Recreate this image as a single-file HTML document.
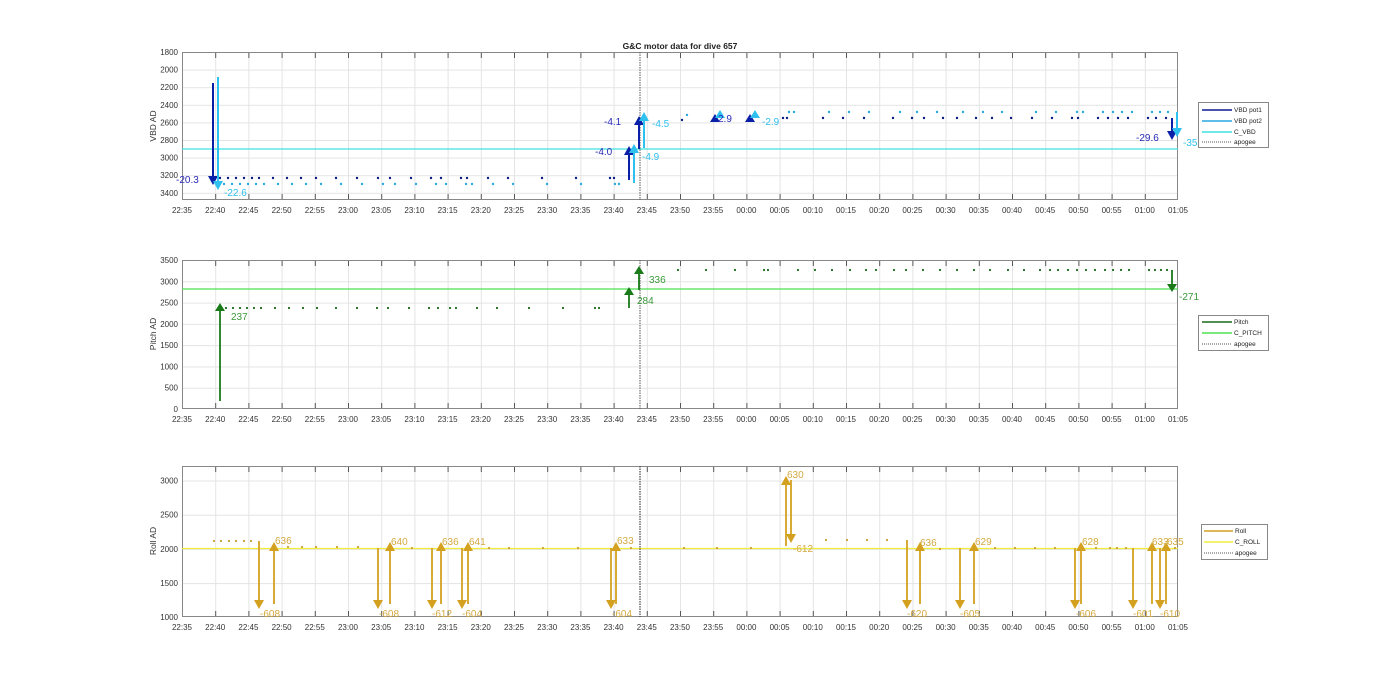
<!DOCTYPE html>
<html><head><meta charset="utf-8"><style>
html,body{margin:0;padding:0;background:#fff;}
svg{display:block;font-family:"Liberation Sans",sans-serif;}
.tl{font-size:8px;fill:#333;}
</style></head><body>
<svg width="1400" height="693" viewBox="0 0 1400 693" xmlns="http://www.w3.org/2000/svg">
<defs>
<pattern id="gv" patternUnits="userSpaceOnUse" x="182" y="0" width="33.2" height="10"><line x1="0.5" y1="0" x2="0.5" y2="10" stroke="#e4e4e4" stroke-width="1"/></pattern>
<pattern id="tk" patternUnits="userSpaceOnUse" x="182" y="0" width="33.2" height="10"><line x1="0.5" y1="0" x2="0.5" y2="10" stroke="#555" stroke-width="1"/></pattern>
<pattern id="h1" patternUnits="userSpaceOnUse" x="0" y="52" width="10" height="17.6"><line x1="0" y1="0.5" x2="10" y2="0.5" stroke="#e4e4e4"/></pattern>
<pattern id="h2" patternUnits="userSpaceOnUse" x="0" y="260" width="10" height="21.29"><line x1="0" y1="0.5" x2="10" y2="0.5" stroke="#e4e4e4"/></pattern>
<pattern id="h3" patternUnits="userSpaceOnUse" x="0" y="480.5" width="10" height="34.2"><line x1="0" y1="0.5" x2="10" y2="0.5" stroke="#e4e4e4"/></pattern>
<marker id="mb" markerWidth="8" markerHeight="8" refX="4" refY="6" orient="auto-start-reverse" markerUnits="userSpaceOnUse"><path d="M0,0 L8,0 L4,7 Z" transform="rotate(0)" fill="#0a1fa8"/></marker>
</defs>

<!-- title -->
<text x="680" y="49" text-anchor="middle" font-size="8.5" font-weight="bold" fill="#222">G&amp;C motor data for dive 657</text>

<!-- ===== PANEL 1 ===== -->
<rect x="182" y="52" width="996" height="148" fill="url(#h1)"/>
<rect x="182" y="52" width="996" height="148" fill="url(#gv)"/>
<rect x="182" y="52" width="996" height="6" fill="url(#tk)"/>
<rect x="182" y="194" width="996" height="6" fill="url(#tk)"/>
<rect x="182.5" y="52.5" width="995" height="147" fill="none" stroke="#888"/>
<g class="tl" text-anchor="end">
<text x="178" y="55">1800</text><text x="178" y="72.6">2000</text><text x="178" y="90.2">2200</text><text x="178" y="107.8">2400</text><text x="178" y="125.4">2600</text><text x="178" y="143">2800</text><text x="178" y="160.6">3000</text><text x="178" y="178.2">3200</text><text x="178" y="195.8">3400</text>
</g>
<text transform="translate(156,126) rotate(-90)" text-anchor="middle" font-size="8.5" fill="#333">VBD AD</text>
<line x1="182" y1="149" x2="1178" y2="149" stroke="#3ee0e0" stroke-width="1.3"/>
<line x1="640" y1="52" x2="640" y2="200" stroke="#555" stroke-width="1" stroke-dasharray="1.5,1"/>
<g fill="#0a1a80">
<circle cx="220" cy="178" r="1.2"/><circle cx="228" cy="178" r="1.2"/><circle cx="236" cy="178" r="1.2"/><circle cx="244" cy="178" r="1.2"/><circle cx="252" cy="178" r="1.2"/><circle cx="259" cy="178" r="1.2"/><circle cx="273" cy="178" r="1.2"/><circle cx="287" cy="178" r="1.2"/><circle cx="301" cy="178" r="1.2"/><circle cx="316" cy="178" r="1.2"/><circle cx="336" cy="178" r="1.2"/><circle cx="357" cy="178" r="1.2"/><circle cx="378" cy="178" r="1.2"/><circle cx="390" cy="178" r="1.2"/><circle cx="411" cy="178" r="1.2"/><circle cx="431" cy="178" r="1.2"/><circle cx="441" cy="178" r="1.2"/><circle cx="461" cy="178" r="1.2"/><circle cx="467" cy="178" r="1.2"/><circle cx="488" cy="178" r="1.2"/><circle cx="508" cy="178" r="1.2"/><circle cx="542" cy="178" r="1.2"/><circle cx="576" cy="178" r="1.2"/><circle cx="610" cy="178" r="1.2"/><circle cx="614" cy="178" r="1.2"/>
<circle cx="682" cy="120" r="1.2"/><circle cx="783" cy="118" r="1.2"/><circle cx="787" cy="118" r="1.2"/><circle cx="823" cy="118" r="1.2"/><circle cx="843" cy="118" r="1.2"/><circle cx="864" cy="118" r="1.2"/><circle cx="893" cy="118" r="1.2"/><circle cx="912" cy="118" r="1.2"/><circle cx="924" cy="118" r="1.2"/><circle cx="943" cy="118" r="1.2"/><circle cx="957" cy="118" r="1.2"/><circle cx="976" cy="118" r="1.2"/><circle cx="992" cy="118" r="1.2"/><circle cx="1011" cy="118" r="1.2"/><circle cx="1032" cy="118" r="1.2"/><circle cx="1052" cy="118" r="1.2"/><circle cx="1072" cy="118" r="1.2"/><circle cx="1078" cy="118" r="1.2"/><circle cx="1098" cy="118" r="1.2"/><circle cx="1108" cy="118" r="1.2"/><circle cx="1118" cy="118" r="1.2"/><circle cx="1128" cy="118" r="1.2"/><circle cx="1148" cy="118" r="1.2"/><circle cx="1156" cy="118" r="1.2"/><circle cx="1166" cy="118" r="1.2"/>
</g>
<g fill="#2aa8e0">
<circle cx="224" cy="184" r="1.2"/><circle cx="232" cy="184" r="1.2"/><circle cx="240" cy="184" r="1.2"/><circle cx="248" cy="184" r="1.2"/><circle cx="256" cy="184" r="1.2"/><circle cx="264" cy="184" r="1.2"/><circle cx="278" cy="184" r="1.2"/><circle cx="292" cy="184" r="1.2"/><circle cx="306" cy="184" r="1.2"/><circle cx="321" cy="184" r="1.2"/><circle cx="341" cy="184" r="1.2"/><circle cx="362" cy="184" r="1.2"/><circle cx="383" cy="184" r="1.2"/><circle cx="395" cy="184" r="1.2"/><circle cx="416" cy="184" r="1.2"/><circle cx="436" cy="184" r="1.2"/><circle cx="446" cy="184" r="1.2"/><circle cx="466" cy="184" r="1.2"/><circle cx="472" cy="184" r="1.2"/><circle cx="493" cy="184" r="1.2"/><circle cx="513" cy="184" r="1.2"/><circle cx="547" cy="184" r="1.2"/><circle cx="581" cy="184" r="1.2"/><circle cx="615" cy="184" r="1.2"/><circle cx="619" cy="184" r="1.2"/>
<circle cx="687" cy="115" r="1.2"/><circle cx="789" cy="112" r="1.2"/><circle cx="794" cy="112" r="1.2"/><circle cx="829" cy="112" r="1.2"/><circle cx="849" cy="112" r="1.2"/><circle cx="869" cy="112" r="1.2"/><circle cx="900" cy="112" r="1.2"/><circle cx="917" cy="112" r="1.2"/><circle cx="937" cy="112" r="1.2"/><circle cx="963" cy="112" r="1.2"/><circle cx="983" cy="112" r="1.2"/><circle cx="1002" cy="112" r="1.2"/><circle cx="1036" cy="112" r="1.2"/><circle cx="1056" cy="112" r="1.2"/><circle cx="1077" cy="112" r="1.2"/><circle cx="1083" cy="112" r="1.2"/><circle cx="1103" cy="112" r="1.2"/><circle cx="1113" cy="112" r="1.2"/><circle cx="1122" cy="112" r="1.2"/><circle cx="1132" cy="112" r="1.2"/><circle cx="1152" cy="112" r="1.2"/><circle cx="1160" cy="112" r="1.2"/><circle cx="1168" cy="112" r="1.2"/>
</g>
<!-- arrows panel1 -->
<g stroke-width="2">
<line x1="213" y1="83" x2="213" y2="178" stroke="#0a1fa8"/><path d="M208,176 L218,176 L213,185 Z" fill="#0a1fa8"/>
<line x1="218" y1="77" x2="218" y2="183" stroke="#2ec0ee"/><path d="M213,181 L223,181 L218,190 Z" fill="#2ec0ee"/>
<line x1="629" y1="180" x2="629" y2="153" stroke="#0a1fa8"/><path d="M624,155 L634,155 L629,146 Z" fill="#0a1fa8"/>
<line x1="634" y1="183" x2="634" y2="151" stroke="#2ec0ee"/><path d="M629,153 L639,153 L634,144 Z" fill="#2ec0ee"/>
<line x1="639" y1="149" x2="639" y2="123" stroke="#0a1fa8"/><path d="M634,125 L644,125 L639,116 Z" fill="#0a1fa8"/>
<line x1="644" y1="148" x2="644" y2="119" stroke="#2ec0ee"/><path d="M639,121 L649,121 L644,112 Z" fill="#2ec0ee"/>
<path d="M710,122 L720,122 L715,114 Z" fill="#0a1fa8"/><path d="M715,118 L725,118 L720,110 Z" fill="#2ec0ee"/>
<path d="M745,122 L755,122 L750,114 Z" fill="#0a1fa8"/><path d="M750,118 L760,118 L755,110 Z" fill="#2ec0ee"/>
<line x1="1172" y1="118" x2="1172" y2="133" stroke="#0a1fa8"/><path d="M1167,131 L1177,131 L1172,140 Z" fill="#0a1fa8"/>
<line x1="1177" y1="112" x2="1177" y2="130" stroke="#2ec0ee"/><path d="M1172,128 L1182,128 L1177,137 Z" fill="#2ec0ee"/>
</g>
<g font-size="10">
<text x="176" y="183" fill="#2a2ab8">-20.3</text>
<text x="224" y="196" fill="#2ec0ee">-22.6</text>
<text x="595" y="155" fill="#2a2ab8">-4.0</text>
<text x="642" y="160" fill="#2ec0ee">-4.9</text>
<text x="604" y="125" fill="#2a2ab8">-4.1</text>
<text x="652" y="127" fill="#2ec0ee">-4.5</text>
<text x="718" y="122" fill="#2a2ab8">2.9</text>
<text x="762" y="125" fill="#2ec0ee">-2.9</text>
<text x="1136" y="141" fill="#2a2ab8">-29.6</text>
<text x="1183" y="146" fill="#2ec0ee">-35</text>
</g>
<rect x="1198.5" y="102.5" width="70" height="45" fill="#fff" stroke="#888"/>
<g font-size="6.5" fill="#222">
<line x1="1202" y1="110" x2="1232" y2="110" stroke="#0a1a90" stroke-width="1.5"/><text x="1234" y="112">VBD pot1</text>
<line x1="1202" y1="121" x2="1232" y2="121" stroke="#2aa8e0" stroke-width="1.5"/><text x="1234" y="123">VBD pot2</text>
<line x1="1202" y1="132" x2="1232" y2="132" stroke="#3ee0e0" stroke-width="1.5"/><text x="1234" y="134">C_VBD</text>
<line x1="1202" y1="142" x2="1232" y2="142" stroke="#555" stroke-dasharray="1,1"/><text x="1234" y="144">apogee</text>
</g>

<!-- ===== PANEL 2 ===== -->
<rect x="182" y="260" width="996" height="149" fill="url(#h2)"/>
<rect x="182" y="260" width="996" height="149" fill="url(#gv)"/>
<rect x="182" y="260" width="996" height="6" fill="url(#tk)"/>
<rect x="182" y="403" width="996" height="6" fill="url(#tk)"/>
<rect x="182.5" y="260.5" width="995" height="148" fill="none" stroke="#888"/>
<g class="tl" text-anchor="end">
<text x="178" y="263">3500</text><text x="178" y="284.3">3000</text><text x="178" y="305.6">2500</text><text x="178" y="326.9">2000</text><text x="178" y="348.1">1500</text><text x="178" y="369.4">1000</text><text x="178" y="390.7">500</text><text x="178" y="412">0</text>
</g>
<text transform="translate(156,334) rotate(-90)" text-anchor="middle" font-size="8.5" fill="#333">Pitch AD</text>
<line x1="182" y1="289" x2="1178" y2="289" stroke="#4ee04e" stroke-width="1.3"/>
<line x1="640" y1="260" x2="640" y2="409" stroke="#555" stroke-dasharray="1.5,1"/>
<g fill="#1a6a1a">
<circle cx="226" cy="308" r="1.1"/><circle cx="233" cy="308" r="1.1"/><circle cx="240" cy="308" r="1.1"/><circle cx="247" cy="308" r="1.1"/><circle cx="254" cy="308" r="1.1"/><circle cx="261" cy="308" r="1.1"/><circle cx="275" cy="308" r="1.1"/><circle cx="289" cy="308" r="1.1"/><circle cx="303" cy="308" r="1.1"/><circle cx="317" cy="308" r="1.1"/><circle cx="336" cy="308" r="1.1"/><circle cx="357" cy="308" r="1.1"/><circle cx="377" cy="308" r="1.1"/><circle cx="388" cy="308" r="1.1"/><circle cx="409" cy="308" r="1.1"/><circle cx="429" cy="308" r="1.1"/><circle cx="438" cy="308" r="1.1"/><circle cx="450" cy="308" r="1.1"/><circle cx="456" cy="308" r="1.1"/><circle cx="477" cy="308" r="1.1"/><circle cx="497" cy="308" r="1.1"/><circle cx="529" cy="308" r="1.1"/><circle cx="563" cy="308" r="1.1"/><circle cx="595" cy="308" r="1.1"/><circle cx="599" cy="308" r="1.1"/>
<circle cx="678" cy="270" r="1.1"/><circle cx="706" cy="270" r="1.1"/><circle cx="735" cy="270" r="1.1"/><circle cx="764" cy="270" r="1.1"/><circle cx="768" cy="270" r="1.1"/><circle cx="798" cy="270" r="1.1"/><circle cx="815" cy="270" r="1.1"/><circle cx="832" cy="270" r="1.1"/><circle cx="850" cy="270" r="1.1"/><circle cx="866" cy="270" r="1.1"/><circle cx="876" cy="270" r="1.1"/><circle cx="894" cy="270" r="1.1"/><circle cx="906" cy="270" r="1.1"/><circle cx="923" cy="270" r="1.1"/><circle cx="940" cy="270" r="1.1"/><circle cx="957" cy="270" r="1.1"/><circle cx="974" cy="270" r="1.1"/><circle cx="990" cy="270" r="1.1"/><circle cx="1008" cy="270" r="1.1"/><circle cx="1024" cy="270" r="1.1"/><circle cx="1040" cy="270" r="1.1"/><circle cx="1050" cy="270" r="1.1"/><circle cx="1058" cy="270" r="1.1"/><circle cx="1068" cy="270" r="1.1"/><circle cx="1077" cy="270" r="1.1"/><circle cx="1086" cy="270" r="1.1"/><circle cx="1095" cy="270" r="1.1"/><circle cx="1105" cy="270" r="1.1"/><circle cx="1113" cy="270" r="1.1"/><circle cx="1121" cy="270" r="1.1"/><circle cx="1129" cy="270" r="1.1"/><circle cx="1149" cy="270" r="1.1"/><circle cx="1155" cy="270" r="1.1"/><circle cx="1161" cy="270" r="1.1"/><circle cx="1167" cy="270" r="1.1"/>
</g>
<g stroke-width="1.8" stroke="#1a7a1a">
<line x1="220" y1="401" x2="220" y2="310"/><line x1="629" y1="308" x2="629" y2="294"/><line x1="639" y1="290" x2="639" y2="272"/><line x1="1172" y1="270" x2="1172" y2="285"/>
</g>
<g fill="#1a7a1a">
<path d="M215,311 L225,311 L220,303 Z"/><path d="M624,295 L634,295 L629,287 Z"/><path d="M634,274 L644,274 L639,266 Z"/><path d="M1167,284 L1177,284 L1172,292 Z"/>
</g>
<g font-size="10" fill="#3a9a3a">
<text x="231" y="320">237</text><text x="637" y="304">284</text><text x="649" y="283">336</text><text x="1179" y="300">-271</text>
</g>
<rect x="1198.5" y="315.5" width="70" height="35" fill="#fff" stroke="#888"/>
<g font-size="6.5" fill="#222">
<line x1="1202" y1="322" x2="1232" y2="322" stroke="#1a6a1a" stroke-width="1.5"/><text x="1234" y="324">Pitch</text>
<line x1="1202" y1="333" x2="1232" y2="333" stroke="#4ee04e" stroke-width="1.5"/><text x="1234" y="335">C_PITCH</text>
<line x1="1202" y1="344" x2="1232" y2="344" stroke="#555" stroke-dasharray="1,1"/><text x="1234" y="346">apogee</text>
</g>

<!-- ===== PANEL 3 ===== -->
<rect x="182" y="466" width="996" height="151" fill="url(#h3)"/>
<rect x="182" y="466" width="996" height="151" fill="url(#gv)"/>
<rect x="182" y="466" width="996" height="6" fill="url(#tk)"/>
<rect x="182" y="611" width="996" height="6" fill="url(#tk)"/>
<rect x="182.5" y="466.5" width="995" height="150" fill="none" stroke="#888"/>
<g class="tl" text-anchor="end">
<text x="178" y="483.5">3000</text><text x="178" y="517.7">2500</text><text x="178" y="551.9">2000</text><text x="178" y="586.1">1500</text><text x="178" y="620">1000</text>
</g>
<text transform="translate(156,541) rotate(-90)" text-anchor="middle" font-size="8.5" fill="#333">Roll AD</text>
<line x1="182" y1="548.5" x2="1178" y2="548.5" stroke="#f0ee3a" stroke-width="1.3"/>
<line x1="640" y1="466" x2="640" y2="617" stroke="#444" stroke-width="1.2" stroke-dasharray="1.5,1"/>
<g fill="#c8a030">
<circle cx="214" cy="541" r="1.1"/><circle cx="221" cy="541" r="1.1"/><circle cx="229" cy="541" r="1.1"/><circle cx="236" cy="541" r="1.1"/><circle cx="244" cy="541" r="1.1"/><circle cx="251" cy="541" r="1.1"/>
<circle cx="288" cy="547" r="1.1"/><circle cx="302" cy="547" r="1.1"/><circle cx="316" cy="547" r="1.1"/><circle cx="337" cy="547" r="1.1"/><circle cx="358" cy="547" r="1.1"/><circle cx="412" cy="548" r="1.1"/><circle cx="489" cy="548" r="1.1"/><circle cx="509" cy="548" r="1.1"/><circle cx="543" cy="548" r="1.1"/><circle cx="578" cy="548" r="1.1"/><circle cx="631" cy="548" r="1.1"/>
<circle cx="826" cy="540" r="1.1"/><circle cx="847" cy="540" r="1.1"/><circle cx="867" cy="540" r="1.1"/><circle cx="887" cy="540" r="1.1"/>
<circle cx="940" cy="549" r="1.1"/><circle cx="995" cy="548" r="1.1"/><circle cx="1015" cy="548" r="1.1"/><circle cx="1035" cy="548" r="1.1"/><circle cx="1055" cy="548" r="1.1"/><circle cx="1096" cy="548" r="1.1"/><circle cx="1110" cy="548" r="1.1"/><circle cx="1117" cy="548" r="1.1"/><circle cx="1126" cy="548" r="1.1"/><circle cx="1175" cy="548" r="1.1"/>
<circle cx="684" cy="548" r="1.1"/><circle cx="717" cy="548" r="1.1"/><circle cx="751" cy="548" r="1.1"/>
</g>
<g stroke="#d4a020" stroke-width="1.8">
<line x1="259" y1="541" x2="259" y2="601"/><line x1="274" y1="604" x2="274" y2="550"/>
<line x1="378" y1="548" x2="378" y2="601"/><line x1="390" y1="604" x2="390" y2="550"/>
<line x1="432" y1="548" x2="432" y2="601"/><line x1="441" y1="604" x2="441" y2="550"/>
<line x1="462" y1="548" x2="462" y2="601"/><line x1="468" y1="604" x2="468" y2="550"/>
<line x1="611" y1="548" x2="611" y2="601"/><line x1="616" y1="604" x2="616" y2="550"/>
<line x1="786" y1="546" x2="786" y2="484"/><line x1="791" y1="480" x2="791" y2="535"/>
<line x1="907" y1="540" x2="907" y2="601"/><line x1="920" y1="604" x2="920" y2="550"/>
<line x1="960" y1="548" x2="960" y2="601"/><line x1="974" y1="604" x2="974" y2="550"/>
<line x1="1075" y1="548" x2="1075" y2="601"/><line x1="1081" y1="604" x2="1081" y2="550"/>
<line x1="1133" y1="548" x2="1133" y2="601"/><line x1="1152" y1="604" x2="1152" y2="550"/>
<line x1="1160" y1="548" x2="1160" y2="601"/><line x1="1166" y1="604" x2="1166" y2="550"/>
</g>
<g fill="#d4a020">
<path d="M254,600 L264,600 L259,609 Z"/><path d="M269,551 L279,551 L274,542 Z"/>
<path d="M373,600 L383,600 L378,609 Z"/><path d="M385,551 L395,551 L390,542 Z"/>
<path d="M427,600 L437,600 L432,609 Z"/><path d="M436,551 L446,551 L441,542 Z"/>
<path d="M457,600 L467,600 L462,609 Z"/><path d="M463,551 L473,551 L468,542 Z"/>
<path d="M606,600 L616,600 L611,609 Z"/><path d="M611,551 L621,551 L616,542 Z"/>
<path d="M781,485 L791,485 L786,476 Z"/><path d="M786,534 L796,534 L791,543 Z"/>
<path d="M902,600 L912,600 L907,609 Z"/><path d="M915,551 L925,551 L920,542 Z"/>
<path d="M955,600 L965,600 L960,609 Z"/><path d="M969,551 L979,551 L974,542 Z"/>
<path d="M1070,600 L1080,600 L1075,609 Z"/><path d="M1076,551 L1086,551 L1081,542 Z"/>
<path d="M1128,600 L1138,600 L1133,609 Z"/><path d="M1147,551 L1157,551 L1152,542 Z"/>
<path d="M1155,600 L1165,600 L1160,609 Z"/><path d="M1161,551 L1171,551 L1166,542 Z"/>
</g>
<g font-size="10" fill="#d4aa40">
<text x="275" y="544">636</text><text x="260" y="617">-608</text>
<text x="391" y="545">640</text><text x="379" y="617">-608</text>
<text x="442" y="545">636</text><text x="432" y="617">-612</text>
<text x="469" y="545">641</text><text x="462" y="617">-604</text>
<text x="617" y="544">633</text><text x="612" y="617">-604</text>
<text x="787" y="478">630</text><text x="793" y="552">-612</text>
<text x="920" y="546">636</text><text x="907" y="617">-620</text>
<text x="975" y="545">629</text><text x="960" y="617">-605</text>
<text x="1082" y="545">628</text><text x="1076" y="617">-606</text>
<text x="1133" y="617">-601</text><text x="1152" y="545">633</text>
<text x="1160" y="617">-610</text><text x="1167" y="545">635</text>
</g>
<rect x="1201.5" y="524.5" width="66" height="35" fill="#fff" stroke="#888"/>
<g font-size="6.5" fill="#222">
<line x1="1204" y1="531" x2="1233" y2="531" stroke="#d4a020" stroke-width="1.5"/><text x="1235" y="533">Roll</text>
<line x1="1204" y1="542" x2="1233" y2="542" stroke="#f0ee3a" stroke-width="1.5"/><text x="1235" y="544">C_ROLL</text>
<line x1="1204" y1="553" x2="1233" y2="553" stroke="#555" stroke-dasharray="1,1"/><text x="1235" y="555">apogee</text>
</g>

<!-- x tick labels -->
<g class="tl" text-anchor="middle">
<text y="213"><tspan x="182">22:35</tspan><tspan x="215.2">22:40</tspan><tspan x="248.4">22:45</tspan><tspan x="281.6">22:50</tspan><tspan x="314.8">22:55</tspan><tspan x="348">23:00</tspan><tspan x="381.2">23:05</tspan><tspan x="414.4">23:10</tspan><tspan x="447.6">23:15</tspan><tspan x="480.8">23:20</tspan><tspan x="514">23:25</tspan><tspan x="547.2">23:30</tspan><tspan x="580.4">23:35</tspan><tspan x="613.6">23:40</tspan><tspan x="646.8">23:45</tspan><tspan x="680">23:50</tspan><tspan x="713.2">23:55</tspan><tspan x="746.4">00:00</tspan><tspan x="779.6">00:05</tspan><tspan x="812.8">00:10</tspan><tspan x="846">00:15</tspan><tspan x="879.2">00:20</tspan><tspan x="912.4">00:25</tspan><tspan x="945.6">00:30</tspan><tspan x="978.8">00:35</tspan><tspan x="1012">00:40</tspan><tspan x="1045.2">00:45</tspan><tspan x="1078.4">00:50</tspan><tspan x="1111.6">00:55</tspan><tspan x="1144.8">01:00</tspan><tspan x="1178">01:05</tspan></text>
<text y="422"><tspan x="182">22:35</tspan><tspan x="215.2">22:40</tspan><tspan x="248.4">22:45</tspan><tspan x="281.6">22:50</tspan><tspan x="314.8">22:55</tspan><tspan x="348">23:00</tspan><tspan x="381.2">23:05</tspan><tspan x="414.4">23:10</tspan><tspan x="447.6">23:15</tspan><tspan x="480.8">23:20</tspan><tspan x="514">23:25</tspan><tspan x="547.2">23:30</tspan><tspan x="580.4">23:35</tspan><tspan x="613.6">23:40</tspan><tspan x="646.8">23:45</tspan><tspan x="680">23:50</tspan><tspan x="713.2">23:55</tspan><tspan x="746.4">00:00</tspan><tspan x="779.6">00:05</tspan><tspan x="812.8">00:10</tspan><tspan x="846">00:15</tspan><tspan x="879.2">00:20</tspan><tspan x="912.4">00:25</tspan><tspan x="945.6">00:30</tspan><tspan x="978.8">00:35</tspan><tspan x="1012">00:40</tspan><tspan x="1045.2">00:45</tspan><tspan x="1078.4">00:50</tspan><tspan x="1111.6">00:55</tspan><tspan x="1144.8">01:00</tspan><tspan x="1178">01:05</tspan></text>
<text y="630"><tspan x="182">22:35</tspan><tspan x="215.2">22:40</tspan><tspan x="248.4">22:45</tspan><tspan x="281.6">22:50</tspan><tspan x="314.8">22:55</tspan><tspan x="348">23:00</tspan><tspan x="381.2">23:05</tspan><tspan x="414.4">23:10</tspan><tspan x="447.6">23:15</tspan><tspan x="480.8">23:20</tspan><tspan x="514">23:25</tspan><tspan x="547.2">23:30</tspan><tspan x="580.4">23:35</tspan><tspan x="613.6">23:40</tspan><tspan x="646.8">23:45</tspan><tspan x="680">23:50</tspan><tspan x="713.2">23:55</tspan><tspan x="746.4">00:00</tspan><tspan x="779.6">00:05</tspan><tspan x="812.8">00:10</tspan><tspan x="846">00:15</tspan><tspan x="879.2">00:20</tspan><tspan x="912.4">00:25</tspan><tspan x="945.6">00:30</tspan><tspan x="978.8">00:35</tspan><tspan x="1012">00:40</tspan><tspan x="1045.2">00:45</tspan><tspan x="1078.4">00:50</tspan><tspan x="1111.6">00:55</tspan><tspan x="1144.8">01:00</tspan><tspan x="1178">01:05</tspan></text>
</g>
</svg>
</body></html>
